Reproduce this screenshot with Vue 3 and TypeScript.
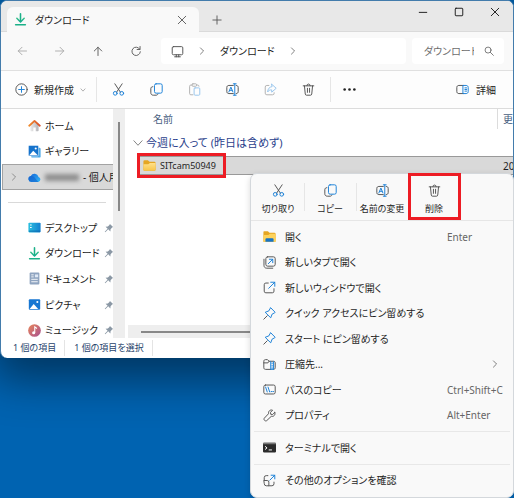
<script setup lang="ts">
import { ref } from 'vue'

interface NavItem { icon: string; label: string }
interface ToolItem { icon: string; label: string; disabled?: boolean }
interface MenuItem { icon: string; label: string; shortcut?: string; submenu?: boolean }

const search = ref('')

const navButtons: ToolItem[] = [
  { icon: 'back', label: '戻る', disabled: true },
  { icon: 'forward', label: '進む', disabled: true },
  { icon: 'up', label: '上へ' },
  { icon: 'refresh', label: '最新の情報に更新' },
]

const tools: ToolItem[] = [
  { icon: 'cut', label: '切り取り' },
  { icon: 'copy', label: 'コピー' },
  { icon: 'paste', label: '貼り付け', disabled: true },
  { icon: 'rename', label: '名前の変更' },
  { icon: 'share', label: '共有', disabled: true },
  { icon: 'trash', label: '削除' },
]

const places: NavItem[] = [
  { icon: 'home', label: 'ホーム' },
  { icon: 'gallery', label: 'ギャラリー' },
]

const pinned: NavItem[] = [
  { icon: 'desktop', label: 'デスクトップ' },
  { icon: 'download', label: 'ダウンロード' },
  { icon: 'document', label: 'ドキュメント' },
  { icon: 'picture', label: 'ピクチャ' },
  { icon: 'music', label: 'ミュージック' },
]

const quickActions: ToolItem[] = [
  { icon: 'cut', label: '切り取り' },
  { icon: 'copy', label: 'コピー' },
  { icon: 'rename', label: '名前の変更' },
  { icon: 'trash', label: '削除' },
]

const menuGroups: MenuItem[][] = [
  [
    { icon: 'open', label: '開く', shortcut: 'Enter' },
    { icon: 'newtab', label: '新しいタブで開く' },
    { icon: 'newwindow', label: '新しいウィンドウで開く' },
    { icon: 'pin', label: 'クイック アクセスにピン留めする' },
    { icon: 'pin', label: 'スタート にピン留めする' },
    { icon: 'zip', label: '圧縮先...', submenu: true },
    { icon: 'path', label: 'パスのコピー', shortcut: 'Ctrl+Shift+C' },
    { icon: 'wrench', label: 'プロパティ', shortcut: 'Alt+Enter' },
  ],
  [{ icon: 'terminal', label: 'ターミナルで開く' }],
  [{ icon: 'more', label: 'その他のオプションを確認' }],
]
</script>

<template>
  <svg class="sprite" aria-hidden="true">
    <defs>
      <linearGradient id="g-roof" x1="0" x2="1"><stop offset="0" stop-color="#f08a2c" /><stop offset="1" stop-color="#d8502c" /></linearGradient>
      <linearGradient id="g-wall" x1="0" x2="1"><stop offset="0" stop-color="#ececec" /><stop offset="1" stop-color="#b4b4b8" /></linearGradient>
      <linearGradient id="g-cloud" x1="0" x2="1" y2="1"><stop offset="0" stop-color="#1464d8" /><stop offset="1" stop-color="#35b8f5" /></linearGradient>
      <linearGradient id="g-desk" x1="0" x2="1"><stop offset="0" stop-color="#2cc0e0" /><stop offset="1" stop-color="#1280d0" /></linearGradient>
      <linearGradient id="g-down" y2="1" x2="0"><stop offset="0" stop-color="#35c08a" /><stop offset="1" stop-color="#10a890" /></linearGradient>
      <linearGradient id="g-music" x1="0" x2="1" y2="1"><stop offset="0" stop-color="#e8865a" /><stop offset="1" stop-color="#a85090" /></linearGradient>
      <linearGradient id="g-folder" y2="1" x2="0"><stop offset="0" stop-color="#ffe08a" /><stop offset="1" stop-color="#f8c548" /></linearGradient>
    </defs>
    <symbol id="i-back" viewBox="0 0 16 16"><path d="M14 8H3M8 3 3 8l5 5" class="ln" /></symbol>
    <symbol id="i-forward" viewBox="0 0 16 16"><path d="M2 8h11M8 3l5 5-5 5" class="ln" /></symbol>
    <symbol id="i-up" viewBox="0 0 16 16"><path d="M8 14V3M3 8l5-5 5 5" class="ln" /></symbol>
    <symbol id="i-refresh" viewBox="0 0 16 16"><path d="M13 5.5A5.6 5.6 0 1 0 13.8 9M13.4 2v4H9.5" class="ln" /></symbol>
    <symbol id="i-monitor" viewBox="0 0 16 16"><rect x="1.5" y="2" width="13" height="10" rx="1.5" class="ln" /><path d="M4.5 14.5h7M6.5 12v2.500M9.500 12v2.500" class="ln" /></symbol>
    <symbol id="i-chevron-r" viewBox="0 0 16 16"><path d="m5.500 3 5 5-5 5" class="ln" /></symbol>
    <symbol id="i-chevron-d" viewBox="0 0 16 16"><path d="m2.500 5 5.500 6 5.500-6" class="ln" /></symbol>
    <symbol id="i-search" viewBox="0 0 16 16"><circle cx="6.500" cy="6.500" r="4.800" class="ln" /><path d="m10.200 10.200 4.800 4.800" class="ln" /></symbol>
    <symbol id="i-close" viewBox="0 0 16 16"><path d="m3 3 10 10M13 3 3 13" class="ln" /></symbol>
    <symbol id="i-min" viewBox="0 0 16 16"><path d="M3 8.500h10" class="ln" /></symbol>
    <symbol id="i-max" viewBox="0 0 16 16"><rect x="3" y="3" width="10" height="10" rx="1" class="ln" /></symbol>
    <symbol id="i-plus" viewBox="0 0 16 16"><path d="M8 2.500v11M2.500 8h11" class="ln" /></symbol>
    <symbol id="i-new" viewBox="0 0 16 16"><circle cx="8" cy="8" r="7" class="ln" /><path d="M8 4.500v7M4.500 8h7" class="bl" /></symbol>
    <symbol id="i-cut" viewBox="0 0 16 16"><path d="m3.500 1 7 10.500M12.500 1l-7 10.500" class="ln" /><circle cx="4" cy="12.700" r="2.300" class="bl" /><circle cx="12" cy="12.700" r="2.300" class="bl" /></symbol>
    <symbol id="i-copy" viewBox="0 0 16 16"><path d="M3.500 4.500C2 4.500 1 5.500 1 7v5c0 1.700 1 3 3 3h3.500c1.200 0 2-.6 2.300-1.500" class="ln" /><rect x="5.500" y="1" width="9.500" height="11.500" rx="2" class="bl" /></symbol>
    <symbol id="i-paste" viewBox="0 0 16 16"><path d="M6 14.500H3.500A1.500 1.500 0 0 1 2 13V4a1.500 1.500 0 0 1 1.500-1.500H5M10.500 2.500H12A1.500 1.500 0 0 1 13.500 4" class="ln" /><rect x="5" y="1" width="5.500" height="3" rx="1" class="ln" /><rect x="7.500" y="6" width="7" height="9" rx="1.200" class="bl" /></symbol>
    <symbol id="i-rename" viewBox="0 0 16 16"><path d="M9 3H3.500C2 3 1 4 1 5.500v5C1 12 2 13 3.500 13H9M12.500 3C14.200 3 15 4 15 5.500v5c0 1.500-.8 2.500-2.500 2.500" class="ln" /><path d="m3.500 11 2.500-6 2.500 6M4.500 9h3M10.800 1v14M9 1h3.500M9 15h3.500" class="bl" /></symbol>
    <symbol id="i-share" viewBox="0 0 16 16"><path d="M6 3H3.500A2 2 0 0 0 1.500 5v7.500a2 2 0 0 0 2 2h7a2 2 0 0 0 2-2V12" class="ln" /><path d="M9.500 1.500 15 6.500l-5.500 4.800V8.500C7 8.300 5.500 9.300 4.500 11c.2-3.800 2-6 5-6.500z" class="bl" /></symbol>
    <symbol id="i-trash" viewBox="0 0 16 16"><path d="M1.500 3.500h13M3 3.500l1 10c.1 1 .7 1.500 1.500 1.500h5c.8 0 1.400-.5 1.500-1.500l1-10M6 3.300a2 2 0 0 1 4 0M6.700 6.500v5M9.300 6.500v5" class="ln" /></symbol>
    <symbol id="i-dots" viewBox="0 0 16 16"><circle cx="2" cy="8" r="1.600" fill="#222" /><circle cx="8" cy="8" r="1.600" fill="#222" /><circle cx="14" cy="8" r="1.600" fill="#222" /></symbol>
    <symbol id="i-details" viewBox="0 0 16 16"><path d="M9 13H3.500C2 13 1 12 1 10.500v-5C1 4 2 3 3.500 3H9" class="ln" /><path d="M9 3h3.500C14 3 15 4 15 5.500v5c0 1.500-1 2.500-2.500 2.500H9zM11 6h2M11 8h2M11 10h2" class="bl" /></symbol>
    <symbol id="i-home" viewBox="0 0 16 16"><path d="M3 7v7.200c0 .4.300.8.800.8h2.700v-4.500h3V15h2.700c.5 0 .8-.4.800-.8V7L8 2.500z" fill="url(#g-wall)" /><path d="M1.500 8.300 8 2.300l6.500 6" fill="none" stroke="url(#g-roof)" stroke-width="2.200" stroke-linecap="round" stroke-linejoin="round" /></symbol>
    <symbol id="i-gallery" viewBox="0 0 16 16"><rect x="4" y="3.500" width="11.500" height="12" rx="1.500" fill="#4aa8e8" /><rect x=".5" y=".5" width="12.500" height="13" rx="1.500" fill="#1673cc" stroke="#fff" stroke-width=".6" /><path d="m1.500 12.500 5-5.500 5.500 5.500z" fill="#fff" /><circle cx="9.500" cy="4.300" r="1.300" fill="#fff" /></symbol>
    <symbol id="i-cloud" viewBox="0 0 16 16"><path d="M4 13.500a3.700 3.700 0 0 1-.6-7.300A5.200 5.200 0 0 1 13 7.300a3.200 3.200 0 0 1-.3 6.200z" fill="url(#g-cloud)" /><path d="M4 13.500a3.700 3.700 0 0 1-.6-7.300c1.800-.4 3 .2 4.200 1.300l5.100 6z" fill="#1261cc" opacity=".6" /></symbol>
    <symbol id="i-desktop" viewBox="0 0 16 16"><rect x=".5" y="2" width="15" height="12" rx="1" fill="url(#g-desk)" /><path d="M2.500 5h2M2.500 8h2" stroke="#fff" stroke-width="1.300" /><path d="M1 12.500h14" stroke="#0a62a8" stroke-width="1" /></symbol>
    <symbol id="i-download" viewBox="0 0 16 16"><path d="M3.500 6.500 8 11l4.500-4.500" fill="none" stroke="url(#g-down)" stroke-width="1.900" stroke-linecap="round" stroke-linejoin="round" /><path d="M8 1v9M2 14.500h12" stroke="#1bb088" stroke-width="1.900" stroke-linecap="round" /></symbol>
    <symbol id="i-document" viewBox="0 0 16 16"><rect x="2" y=".5" width="12" height="15" rx="1.200" fill="#8fa4c0" /><rect x="8.500" y="3" width="4" height="3.500" fill="#dfe9f5" /><path d="M4 3.500h3M4 6h3M4 9h8M4 12h8" stroke="#fff" stroke-width="1.100" /></symbol>
    <symbol id="i-picture" viewBox="0 0 16 16"><rect x="1" y="1.500" width="14" height="13" rx="1.300" fill="#1877d2" /><path d="m2 13.500 5-6 5.500 6z" fill="#fff" /><circle cx="11.500" cy="5" r="1.300" fill="#fff" /></symbol>
    <symbol id="i-music" viewBox="0 0 16 16"><circle cx="8" cy="8" r="7.800" fill="url(#g-music)" /><circle cx="7" cy="10.700" r="1.900" fill="#fff" /><path d="M8.300 10.700V3.500l2.700 2" fill="none" stroke="#fff" stroke-width="1.300" /></symbol>
    <symbol id="i-pinned" viewBox="0 0 16 16"><path d="m9.500 1.500 5 5-1.500.8-2.500 2.500-.3 3.700-3.400-3.400L2 14.800l-.8-.8 4.600-4.700L2.500 6l3.700-.4L8.700 3z" fill="#8b98a5" /></symbol>
    <symbol id="i-folder" viewBox="0 0 16 16"><path d="M.5 3A1.500 1.500 0 0 1 2 1.500h4L8 3.500h6A1.500 1.500 0 0 1 15.500 5v8a1.500 1.500 0 0 1-1.500 1.500H2A1.500 1.500 0 0 1 .5 13z" fill="#e5a623" /><path d="M.5 6.500h6L8.500 5h7v8a1.500 1.500 0 0 1-1.500 1.500H2A1.500 1.500 0 0 1 .5 13z" fill="url(#g-folder)" /></symbol>
    <symbol id="i-open" viewBox="0 0 16 16"><path d="M.5 3A1.300 1.300 0 0 1 2 1.500h4L8 3.500h6A1.500 1.500 0 0 1 15.500 5v9.500H.5z" fill="#e5a623" /><path d="M.5 6h6l2-1.500h7v10H.5z" fill="#fdd25c" /><path d="M3 14.500v-3A1.500 1.500 0 0 1 4.500 10h7a1.500 1.500 0 0 1 1.500 1.500v3z" fill="#1673c4" /></symbol>
    <symbol id="i-newtab" viewBox="0 0 16 16"><rect x="3.500" y="1" width="11.500" height="11.500" rx="2.200" class="ln" /><path d="M1.200 4v7.500C1.200 13.500 2.500 15 4.500 15H12" class="ln" /><path d="m6.500 9.500 5.500-5.500M7.800 4H12v4.200" class="bl" /></symbol>
    <symbol id="i-newwindow" viewBox="0 0 16 16"><path d="M6.500 2.500h-3a2 2 0 0 0-2 2v8a2 2 0 0 0 2 2h8a2 2 0 0 0 2-2v-3" class="ln" /><path d="m7 9 7.500-7.500M9.500 1.500h5v5" class="bl" /></symbol>
    <symbol id="i-pin" viewBox="0 0 16 16"><path d="m5.200 10.800-4.200 4.200" class="ln" /><path d="m9.800 1.300 4.900 4.900c.3.300.2.700-.2.900l-3.300 1.700-1.700 4.500L2.700 6.500l4.500-1.700 1.700-3.300c.2-.4.600-.5.900-.2z" class="bl" /></symbol>
    <symbol id="i-zip" viewBox="0 0 16 16"><path d="M9.500 14H3.200C1.800 14 1 13.200 1 12V4c0-1.200.8-2 2.200-2H5.500l2 2H13c1.300 0 2 .8 2 2v6c0 1.200-.7 2-2 2M1 6h5l1.500-2" class="ln" /><path d="M9.500 4.500V14h3.500V4.500M11.200 6v1M11.200 9v1M11.200 12v1" class="bl" /></symbol>
    <symbol id="i-path" viewBox="0 0 16 16"><rect x="1" y="2.500" width="14" height="11" rx="2" class="ln" /><path d="m3.200 5 2 6M6.200 5l2 6M10 10.500h.8M12.200 10.500h.8" class="bl" /></symbol>
    <symbol id="i-wrench" viewBox="0 0 16 16"><path d="M14.500 4.200 11.900 6.800 9.500 6.500 9.200 4.100 11.800 1.500C9 .4 6.300 2.500 6.800 5.800L1.700 11.200c-1.600 1.800 1.100 4.600 3 3L10.200 9c3.300.7 5.500-2 4.300-4.800z" class="ln" /></symbol>
    <symbol id="i-terminal" viewBox="0 0 16 16"><rect y="2" width="16" height="12" rx="1" fill="#2b2b2b" /><path d="M0 4V3a1 1 0 0 1 1-1h14a1 1 0 0 1 1 1v1z" fill="#777" /><path d="m2.500 6.500 2.500 2-2.500 2M7 11h4" fill="none" stroke="#fff" stroke-width="1.200" /></symbol>
    <symbol id="i-more" viewBox="0 0 16 16"><path d="M6 2H4a2.500 2.500 0 0 0-2.500 2.500V8M1.500 8h3.700a2 2 0 0 1 2 2v4.500H4A2.500 2.500 0 0 1 1.500 12zM7.200 14.500H11a2.500 2.500 0 0 0 2.500-2.500v-2" class="ln" /><path d="m8.500 7.500 6-6M10 1.500h4.500V6" class="bl" /></symbol>
  </svg>

  <div class="screen">
    <section class="window">
      <header class="titlebar">
        <div class="tab">
          <svg class="ic"><use href="#i-download" /></svg>
          <span class="tab-name">ダウンロード</span>
          <button class="plain" aria-label="タブを閉じる"><svg class="ic s12"><use href="#i-close" /></svg></button>
        </div>
        <button class="plain add" aria-label="新しいタブ"><svg class="ic s12"><use href="#i-plus" /></svg></button>
        <div class="controls">
          <button class="plain" aria-label="最小化"><svg class="ic s12"><use href="#i-min" /></svg></button>
          <button class="plain" aria-label="最大化"><svg class="ic s12"><use href="#i-max" /></svg></button>
          <button class="plain" aria-label="閉じる"><svg class="ic s12"><use href="#i-close" /></svg></button>
        </div>
      </header>

      <div class="navbar">
        <button v-for="b in navButtons" :key="b.icon" class="plain step" :class="{ dim: b.disabled }" :disabled="b.disabled" :aria-label="b.label">
          <svg class="ic s12"><use :href="'#i-' + b.icon" /></svg>
        </button>
        <div class="address">
          <svg class="ic"><use href="#i-monitor" /></svg>
          <svg class="ic s10"><use href="#i-chevron-r" /></svg>
          <button class="plain crumb">ダウンロード</button>
          <svg class="ic s10"><use href="#i-chevron-r" /></svg>
        </div>
        <label class="search">
          <input v-model="search" type="text" placeholder="ダウンロード" aria-label="検索" />
          <svg class="ic s10"><use href="#i-search" /></svg>
        </label>
      </div>

      <div class="toolbar">
        <button class="plain new">
          <svg class="ic"><use href="#i-new" /></svg>
          <span>新規作成</span>
          <svg class="ic s6"><use href="#i-chevron-d" /></svg>
        </button>
        <button v-for="t in tools" :key="t.icon" class="plain step" :class="{ faint: t.disabled }" :disabled="t.disabled" :aria-label="t.label">
          <svg class="ic"><use :href="'#i-' + t.icon" /></svg>
        </button>
        <button class="plain more" aria-label="もっと見る"><svg class="ic"><use href="#i-dots" /></svg></button>
        <button class="plain details"><svg class="ic"><use href="#i-details" /></svg><span>詳細</span></button>
      </div>

      <div class="body">
        <nav class="sidebar">
          <div class="nav-list">
            <ul class="places">
              <li v-for="p in places" :key="p.icon">
                <a href="#" class="nav-item"><svg class="ic"><use :href="'#i-' + p.icon" /></svg><span>{{ p.label }}</span></a>
              </li>
              <li>
                <a href="#" class="nav-item active">
                  <svg class="ic s10 expander"><use href="#i-chevron-r" /></svg>
                  <svg class="ic"><use href="#i-cloud" /></svg>
                  <span class="masked"></span><span>- 個人用</span>
                </a>
              </li>
            </ul>
            <hr />
            <ul class="pinned">
              <li v-for="p in pinned" :key="p.icon">
                <a href="#" class="nav-item">
                  <svg class="ic"><use :href="'#i-' + p.icon" /></svg><span>{{ p.label }}</span>
                  <svg class="ic s10 mark"><use href="#i-pinned" /></svg>
                </a>
              </li>
            </ul>
          </div>
          <div class="vscroll"><div class="vthumb"></div></div>
        </nav>

        <main class="files">
          <table>
            <thead>
              <tr><th scope="col" class="name">名前</th><th scope="col" class="date">更</th></tr>
            </thead>
            <tbody>
              <tr class="group">
                <th colspan="2" scope="rowgroup">
                  <div class="group-label"><svg class="ic s12"><use href="#i-chevron-d" /></svg>今週に入って (昨日は含めず)</div>
                </th>
              </tr>
              <tr class="file">
                <td class="name">
                  <div class="file-name"><svg class="ic"><use href="#i-folder" /></svg>SITcam50949</div>
                  <div class="mark-box"></div>
                </td>
                <td class="date">20</td>
              </tr>
            </tbody>
          </table>
          <div class="hscroll"><div class="hthumb"></div></div>
        </main>
      </div>

      <footer class="status"><span>1 個の項目</span><span>1 個の項目を選択</span></footer>
    </section>

    <div class="menu" role="menu">
      <div class="quick">
        <button v-for="q in quickActions" :key="q.icon" class="plain action" role="menuitem">
          <svg class="ic"><use :href="'#i-' + q.icon" /></svg>
          <span>{{ q.label }}</span>
          <i v-if="q.icon === 'trash'" class="mark-box"></i>
        </button>
      </div>
      <div class="entries">
        <template v-for="(group, g) in menuGroups" :key="g">
          <hr v-if="g > 0" />
          <button v-for="m in group" :key="m.label" class="plain entry" role="menuitem">
            <svg class="ic"><use :href="'#i-' + m.icon" /></svg>
            <span>{{ m.label }}</span>
            <span v-if="m.shortcut" class="shortcut">{{ m.shortcut }}</span>
            <svg v-if="m.submenu" class="ic s10 sub"><use href="#i-chevron-r" /></svg>
          </button>
        </template>
      </div>
    </div>
  </div>
</template>

<style>
body {
  background: #0063b1;
}
.ln,
.bl {
  fill: none;
  stroke: currentColor;
  stroke-width: 1.2;
  stroke-linecap: round;
  stroke-linejoin: round;
}
.bl {
  stroke: #1c82d8;
}
</style>

<style scoped>
* {
  box-sizing: border-box;
}
.sprite {
  position: absolute;
  width: 0;
  height: 0;
}
.screen {
  position: relative;
  display: grid;
  grid-template-rows: minmax(0, 358fr) 140fr;
  height: 100vh;
  overflow: hidden;
  background: #0063b1;
  color: #1f1f1f;
  font: 10px/16px "Noto Sans", "Noto Sans CJK JP", sans-serif;
  font-feature-settings: "palt";
  white-space: nowrap;
}
.plain {
  display: flex;
  align-items: center;
  justify-content: center;
  padding: 0;
  border: 0;
  background: none;
  color: inherit;
  font: inherit;
  font-feature-settings: inherit;
}
.ic {
  flex: none;
  width: 13px;
  height: 13px;
  color: #555;
}
.s12 {
  width: 12px;
  height: 12px;
}
.s10 {
  width: 10px;
  height: 10px;
}
.s6 {
  width: 6px;
  height: 6px;
}
ul {
  margin: 0;
  padding: 0;
  list-style: none;
}

.window {
  display: flex;
  flex-direction: column;
  overflow: hidden;
  border: 1px solid #437cac;
  border-bottom: 0;
  border-radius: 7px;
  background: #fff;
  box-shadow: 0 14px 44px 8px rgba(0, 0, 0, 0.45);
}
.titlebar {
  display: flex;
  flex: none;
  height: 31px;
  padding-left: 6px;
  border-bottom: 1px solid #dadada;
  background: #e8e8e8;
}
.tab {
  display: flex;
  align-items: center;
  gap: 8px;
  width: 192px;
  height: 25px;
  margin-top: 6px;
  padding: 0 11px 0 7px;
  border-radius: 6px 6px 0 0;
  background: #f9f9f9;
}
.tab-name {
  flex: 1;
}
.add {
  width: 36px;
  padding-top: 8px;
}
.controls {
  display: flex;
  height: 22px;
  margin-left: auto;
}
.controls .plain {
  width: 36px;
}
.controls .ic {
  color: #111;
}
.navbar {
  display: flex;
  flex: none;
  align-items: center;
  height: 39px;
  padding: 0 9px 0 2px;
  border-bottom: 1px solid #e0e0e0;
  background: #f9f9f9;
}
.step {
  width: 38px;
  height: 26px;
}
.dim .ic {
  color: #a8a8a8;
}
.faint {
  opacity: 0.45;
}
.address {
  display: flex;
  flex: 1;
  align-items: center;
  gap: 13px;
  height: 26px;
  margin: 0 6px;
  padding-left: 10px;
  border-radius: 4px;
  background: #fff;
}
.crumb {
  color: #222;
}
.search {
  display: flex;
  align-items: center;
  justify-content: space-between;
  width: 92px;
  height: 26px;
  padding: 0 10px 0 12px;
  border-radius: 4px;
  background: #fff;
}
.search input {
  width: 50px;
  padding: 0;
  border: 0;
  outline: 0;
  background: none;
  font: inherit;
  font-feature-settings: inherit;
}
.search input::placeholder {
  color: #6d6d6d;
}
.toolbar {
  display: flex;
  flex: none;
  align-items: center;
  height: 38px;
  border-bottom: 1px solid #dcdcdc;
  background: #fdfdfd;
}
.new {
  justify-content: flex-start;
  gap: 6px;
  width: 96px;
  height: 25px;
  margin-right: 2px;
  padding-left: 14px;
  border-right: 1px solid #e6e6e6;
}
.more {
  width: 38px;
  height: 25px;
  margin-left: 3px;
  border-left: 1px solid #e6e6e6;
}
.details {
  gap: 7px;
  margin-left: auto;
  padding-right: 17px;
}

.body {
  display: flex;
  flex: 1;
  min-height: 0;
}
.sidebar {
  display: flex;
  width: 124px;
  overflow: hidden;
}
.nav-list {
  flex: 1;
  min-width: 0;
  padding-top: 4px;
}
.places,
.pinned {
  display: grid;
  grid-auto-rows: 1fr;
}
.places {
  height: 77px;
}
.pinned {
  height: 128px;
}
.nav-list hr {
  height: 1px;
  margin: 12px 7px;
  border: 0;
  background: #d9d9d9;
}
.nav-item {
  display: flex;
  align-items: center;
  gap: 4px;
  height: 100%;
  margin-left: 1px;
  padding: 0 3px 0 26px;
  overflow: hidden;
  color: #1a1a1a;
  text-decoration: none;
}
.active {
  padding-left: 6px;
  border: 1px solid #a3a3a3;
  border-right: 0;
  background: #d9d9d9;
}
.expander {
  margin-right: 5px;
  color: #777;
}
.masked {
  flex: none;
  width: 34px;
  height: 7px;
  background: #8f8f8f;
  filter: blur(2px);
}
.mark {
  margin-left: auto;
}
.vscroll {
  width: 12px;
  padding: 13px 0 0 5px;
  background: #eee;
}
.vthumb {
  width: 2px;
  height: 89px;
  background: #888;
}
.files {
  display: flex;
  flex: 1;
  flex-direction: column;
  justify-content: space-between;
  min-width: 0;
  margin-left: 3px;
}
table {
  width: calc(100% - 11px);
  margin-left: 11px;
  border-collapse: separate;
  border-spacing: 0;
  table-layout: fixed;
}
th,
td {
  padding: 0;
  font-weight: 400;
  text-align: left;
}
thead th {
  height: 20px;
  color: #48607f;
}
thead .name {
  padding-left: 14px;
}
.date {
  width: 16px;
  padding-left: 5px;
  overflow: hidden;
}
thead .date {
  border-left: 1px solid #dcdcdc;
}
.group th {
  height: 27px;
  color: #2b3f8c;
  font-size: 11px;
}
.group-label {
  display: flex;
  align-items: center;
  gap: 2px;
  margin-left: -7px;
}
.group-label svg {
  color: #777;
}
.file td {
  position: relative;
  height: 19px;
  border: solid #999;
  border-width: 1px 0;
  background: #d9d9d9;
}
.file td.date {
  padding-left: 6px;
  line-height: 14px;
}
.file-name {
  display: flex;
  align-items: center;
  gap: 4px;
  padding-left: 4px;
  font-size: 9px;
}
.mark-box {
  position: absolute;
  border: 3px solid #ed1c24;
  pointer-events: none;
}
.file .mark-box {
  top: -4px;
  left: -2px;
  width: 89px;
  height: 25px;
}
.hscroll {
  height: 13px;
  padding: 6px 0 0 13px;
  background: #eee;
}
.hthumb {
  width: 70%;
  height: 2px;
  background: #888;
}
.status {
  display: flex;
  flex: none;
  height: 20px;
  align-items: center;
  padding-left: 12px;
  color: #27436b;
  font-size: 9px;
}
.status span {
  margin-right: 9px;
  padding-right: 8px;
  border-right: 1px solid #e4e4e4;
}

.menu {
  position: absolute;
  top: 173px;
  right: 0;
  bottom: 0;
  display: flex;
  flex-direction: column;
  width: 264px;
  border: 1px solid #d4d8dc;
  border-radius: 7px;
  background: #f9f9f9;
  box-shadow: 0 2px 6px rgba(0, 0, 0, 0.15);
}
.quick {
  display: flex;
  height: 47px;
  padding-left: 1px;
  border-bottom: 1px solid #e6e6e6;
}
.action {
  position: relative;
  flex-direction: column;
  gap: 4px;
  width: 52px;
  padding-top: 5px;
  font-size: 9px;
}
.action span {
  line-height: 15px;
}
.action + .action::before {
  content: "";
  position: absolute;
  top: 9px;
  left: 0;
  width: 1px;
  height: 28px;
  background: #e6e6e6;
}
.action .mark-box {
  top: -1px;
  left: 0;
  width: 53px;
  height: 47px;
}
.entries {
  display: flex;
  flex: 1;
  flex-direction: column;
  padding: 3px 0 4px;
}
.entries hr {
  width: calc(100% - 6px);
  height: 1px;
  margin: 3px;
  border: 0;
  background: #e8e8e8;
}
.entry {
  display: grid;
  flex: 1;
  grid-template-columns: 22px 1fr 66px;
  justify-content: start;
  min-height: 0;
  padding-left: 12px;
  text-align: left;
}
.shortcut {
  color: #666;
}
.sub {
  margin-left: 43px;
}
</style>
